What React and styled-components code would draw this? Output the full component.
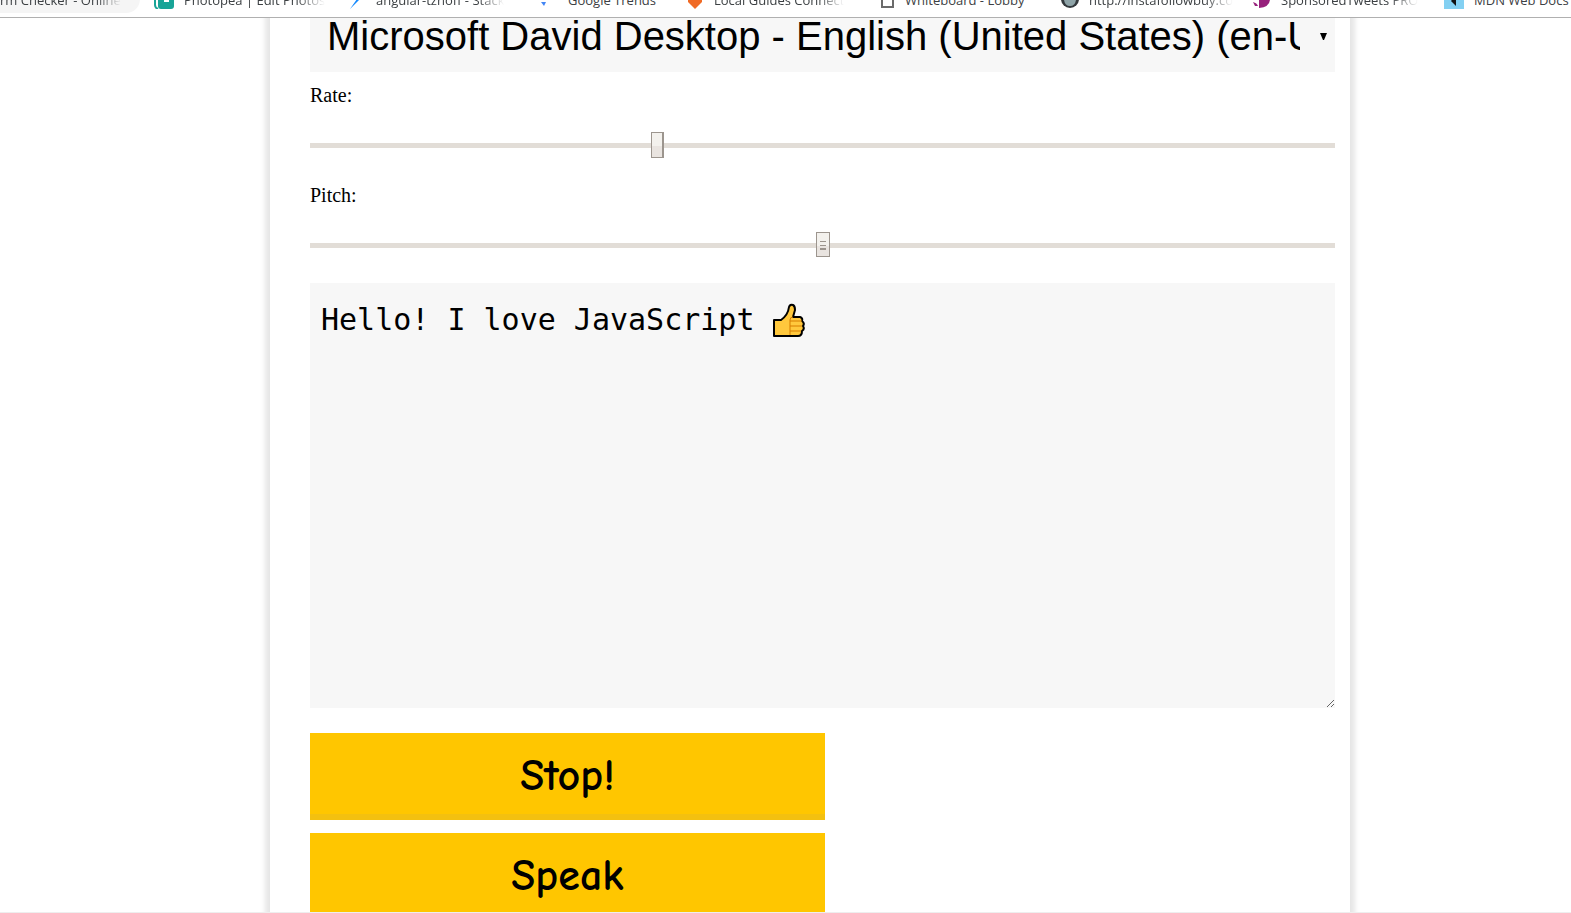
import React from "react";
import styled, { createGlobalStyle, css } from "styled-components";

const GlobalStyle = createGlobalStyle`
  *, *::before, *::after { box-sizing: border-box; }
  body { margin: 0; background: #fff; color: #000; }
`;

const Page = styled.div`
  display: flex;
  flex-direction: column;
  height: 100vh;
  overflow: hidden;
  border-bottom: 1px solid #eee;
`;

const BookmarkBar = styled.nav`
  flex: none;
  display: flex;
  align-items: flex-end;
  height: 18px;
  overflow: hidden;
  border-bottom: 1px solid #b0b0b0;
  background: #fff;
`;

const Bookmark = styled.a`
  flex: none;
  display: flex;
  align-items: center;
  gap: 10px;
  width: ${(p) => p.$width}px;
  height: 28px;
  margin-bottom: 4px;
  margin-right: ${(p) => (p.$active ? 14 : 0)}px;
  border-radius: 0 14px 14px 0;
  background: ${(p) => (p.$active ? "#f5f5f5" : "transparent")};
  color: #3c4043;
  font: 13px/18px "Open Sans", sans-serif;
  text-decoration: none;
  white-space: nowrap;
  svg { flex: none; }
`;

const BookmarkText = styled.span`
  max-width: 144px;
  padding-top: 2px;
  overflow: hidden;
  mask-image: ${(p) => (p.$fade ? "linear-gradient(to right, #000 80%, transparent)" : "none")};
`;

const Viewport = styled.main`
  flex: 1;
  min-height: 0;
  overflow: hidden;
  padding: 0 221px 0 270px;
`;

const Card = styled.form`
  display: flex;
  flex-direction: column;
  margin-top: -36px;
  padding: 20px 15px 40px 40px;
  box-shadow: 0 0 5px 5px rgba(0, 0, 0, 0.1);
`;

const SelectWrap = styled.div`
  position: relative;
  svg {
    position: absolute;
    right: 8px;
    top: 31px;
    pointer-events: none;
  }
`;

const VoiceSelect = styled.select`
  display: block;
  appearance: none;
  width: 100%;
  height: 70px;
  padding: 0 35px 2px 17px;
  border: 0;
  border-radius: 0;
  background: #f7f7f7;
  color: #000;
  font: 40px "Liberation Sans", Arial, sans-serif;
`;

const Field = styled.div`
  display: flex;
  flex-direction: column;
  height: 100px;
  padding-top: 12px;
`;

const Label = styled.label`
  font: 20px/22px "Liberation Serif", "Times New Roman", serif;
`;

const grip = css`
  linear-gradient(#9c958e, #9c958e) 3px 8px / 6px 1px no-repeat,
  linear-gradient(#9c958e, #9c958e) 3px 12px / 6px 1px no-repeat,
  linear-gradient(#9c958e, #9c958e) 3px 15px / 6px 2px no-repeat,
`;

const Slider = styled.input`
  appearance: none;
  width: 100%;
  height: 26px;
  margin: 26px 0 0;
  background: transparent;
  &::-webkit-slider-runnable-track {
    height: 5px;
    background: #e2ddd7;
  }
  &::-webkit-slider-thumb {
    appearance: none;
    width: ${(p) => (p.$grip ? 14 : 13)}px;
    height: ${(p) => (p.$grip ? 25 : 26)}px;
    margin-top: -11px;
    border: 1px solid #9c958e;
    border-right-width: ${(p) => (p.$grip ? 1 : 2)}px;
    background: ${(p) => p.$grip && grip} linear-gradient(#f3f1ed 55%, #e9e4e0 55%);
  }
`;

const MessageWrap = styled.div`
  position: relative;
  margin-top: 11px;
  svg {
    position: absolute;
    left: 462px;
    top: 20px;
    pointer-events: none;
  }
`;

const Message = styled.textarea`
  display: block;
  width: 100%;
  height: 425px;
  padding: 20px 11px;
  border: 0;
  background: #f7f7f7;
  color: #000;
  font: 30px/34px Consolas, "DejaVu Sans Mono", monospace;
`;

const Actions = styled.div`
  display: flex;
  flex-direction: column;
  gap: 13px;
  width: 515px;
  margin-top: 25px;
`;

const ActionButton = styled.button`
  height: 87px;
  padding: 4px 0 0;
  border: 0;
  border-bottom: 6px solid #f3c010;
  background: #ffc600;
  color: #000;
  font: bold 44px "Comic Sans MS", "Comic Neue", Lato, sans-serif;
`;

const Icon = ({ children }) => (
  <svg width="20" height="20" viewBox="0 0 20 20" aria-hidden="true">{children}</svg>
);

const bookmarks = [
  { text: "Photopea | Edit Photos", width: 192, fade: true, icon: <><rect x="4" y="0" width="16" height="20" rx="3" fill="#18a497" /><path d="M1 4v12q0 3 3 4" stroke="#18a497" strokeWidth="2" fill="none" /><path d="M10 8h5v5h-5z" fill="#fff" /></> },
  { text: "angular-tznoff - Stack", width: 192, fade: true, icon: <path d="M14 0l-8 10h5L4 20 16 8h-5z" fill="#1389fd" /> },
  { text: "Google Trends", width: 146, icon: <path d="M3 13h5l-2 4z" fill="#4285f4" /> },
  { text: "Local Guides Connect", width: 191, fade: true, icon: <path d="M11 20L4 13V4h14v9z" fill="#f06a25" /> },
  { text: "Whiteboard - Lobby", width: 184, icon: <path d="M7 1h11v17H7z" fill="#fff" stroke="#6b6b6b" strokeWidth="2" /> },
  { text: "http://instafollowbuy.com", width: 192, fade: true, icon: <><circle cx="11" cy="10" r="9" fill="#34393d" /><path d="M5 11h12q-1 6-6 6t-6-6" fill="#8fa4a8" /></> },
  { text: "SponsoredTweets PRO", width: 193, fade: true, icon: <path d="M2 13q4 1 5 4l-3 0zM8 2h11v8q0 8-11 9z" fill="#97217c" /> },
  { text: "MDN Web Docs", width: 160, icon: <><path d="M0 0h20v20H0z" fill="#83d0f2" /><path d="M7 12l5 5V6z" fill="#111" /></> },
];

const Thumb = () => (
  <svg width="34" height="35" viewBox="0 0 34 35" aria-hidden="true">
    <path d="M2 17h7q7-5 8-13q1-3 4-2q2 1 2 5l-2 7h7q3 1 2 4q3 2 1 5q2 3-1 5q0 5-4 5H2z" fill="#ffc83d" stroke="#000" strokeWidth="2" strokeLinejoin="round" />
    <path d="M18 32V17q0-3 3-3M18 18h12M18 23h12M18 28h11" fill="none" stroke="#d67d00" />
  </svg>
);

export default function App() {
  return (
    <>
      <GlobalStyle />
      <Page>
        <BookmarkBar aria-label="Bookmarks">
          <Bookmark href="#" $width={140} $active>
            <BookmarkText $fade>rm Checker - Online</BookmarkText>
          </Bookmark>
          {bookmarks.map((b) => (
            <Bookmark href="#" key={b.text} $width={b.width}>
              <Icon>{b.icon}</Icon>
              <BookmarkText $fade={b.fade}>{b.text}</BookmarkText>
            </Bookmark>
          ))}
        </BookmarkBar>
        <Viewport>
          <Card onSubmit={(e) => e.preventDefault()}>
            <SelectWrap>
              <VoiceSelect aria-label="Voice">
                <option>Microsoft David Desktop - English (United States) (en-US)</option>
              </VoiceSelect>
              <svg width="7" height="7" viewBox="0 0 7 7" aria-hidden="true"><path d="M0 0h7L4 7H3z" /></svg>
            </SelectWrap>
            <Field>
              <Label htmlFor="rate">Rate:</Label>
              <Slider id="rate" type="range" min="0" max="100" step="any" defaultValue="33.7" />
            </Field>
            <Field>
              <Label htmlFor="pitch">Pitch:</Label>
              <Slider id="pitch" type="range" min="0" max="2" step="0.1" defaultValue="1" $grip />
            </Field>
            <MessageWrap>
              <Message aria-label="Message" spellCheck={false} defaultValue="Hello! I love JavaScript" />
              <Thumb />
            </MessageWrap>
            <Actions>
              <ActionButton type="button">Stop!</ActionButton>
              <ActionButton type="button">Speak</ActionButton>
            </Actions>
          </Card>
        </Viewport>
      </Page>
    </>
  );
}
